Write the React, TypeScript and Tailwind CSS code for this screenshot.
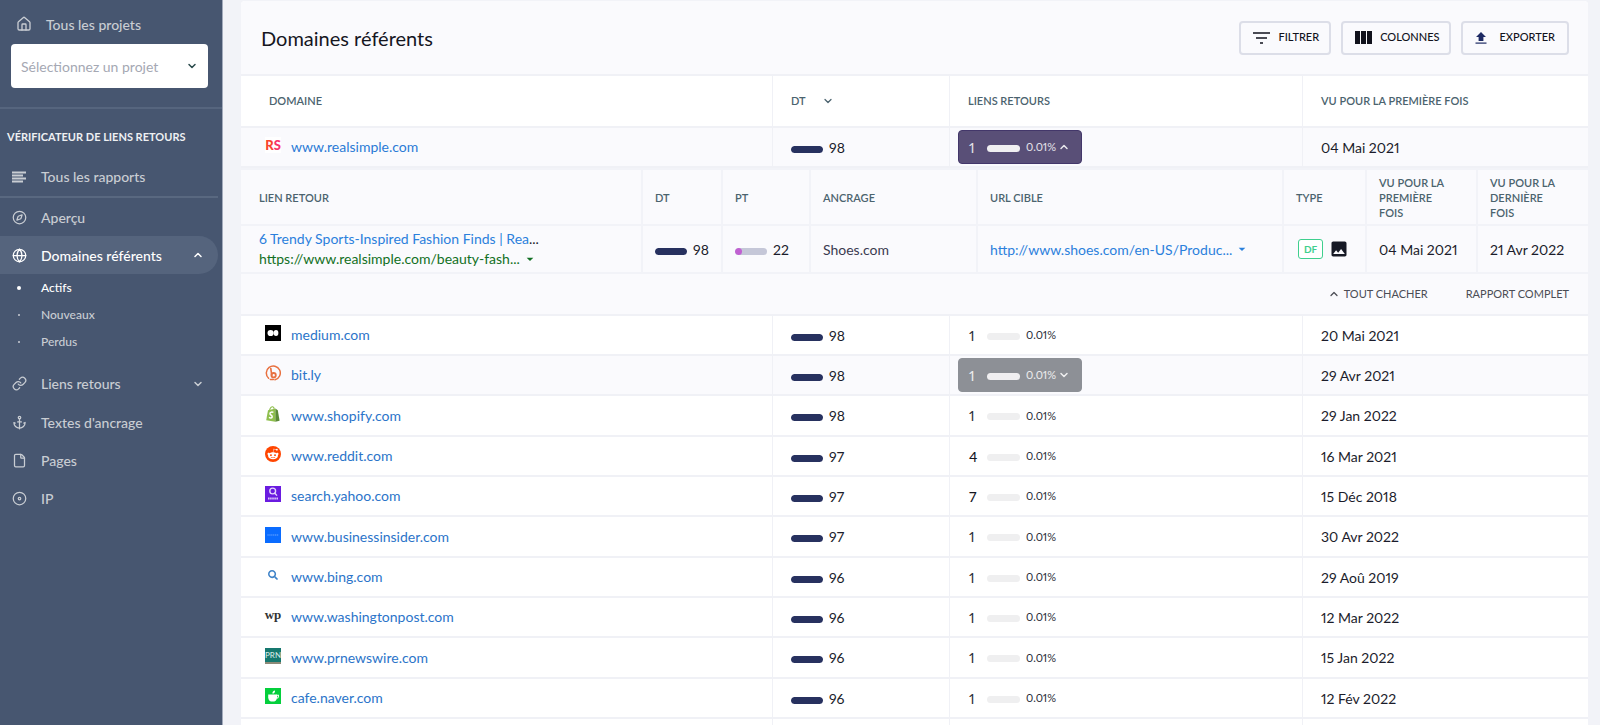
import type { ReactNode } from 'react';
import { useState } from 'react';
import { Anchor, ChevronDown, ChevronUp, Compass, Disc, File, Globe, House, Link } from 'lucide-react';
import { FaRedditAlien, FaSearch } from 'react-icons/fa';
import { MdArrowDropDown, MdImage } from 'react-icons/md';

interface DomainRow {
  domain: string;
  trust: number;
  links: number;
  firstSeen: string;
  icon: ReactNode;
}

const domains: DomainRow[] = [
  { domain: 'medium.com', trust: 98, links: 1, firstSeen: '20 Mai 2021', icon: <MediumIcon /> },
  { domain: 'bit.ly', trust: 98, links: 1, firstSeen: '29 Avr 2021', icon: <BitlyIcon /> },
  { domain: 'www.shopify.com', trust: 98, links: 1, firstSeen: '29 Jan 2022', icon: <ShopifyIcon /> },
  { domain: 'www.reddit.com', trust: 97, links: 4, firstSeen: '16 Mar 2021', icon: <RedditIcon /> },
  { domain: 'search.yahoo.com', trust: 97, links: 7, firstSeen: '15 Déc 2018', icon: <YahooIcon /> },
  { domain: 'www.businessinsider.com', trust: 97, links: 1, firstSeen: '30 Avr 2022', icon: <InsiderIcon /> },
  { domain: 'www.bing.com', trust: 96, links: 1, firstSeen: '29 Aoû 2019', icon: <FaSearch className="size-2.5 text-[#3f83c8]" /> },
  { domain: 'www.washingtonpost.com', trust: 96, links: 1, firstSeen: '12 Mar 2022', icon: <PostIcon /> },
  { domain: 'www.prnewswire.com', trust: 96, links: 1, firstSeen: '15 Jan 2022', icon: <PrnIcon /> },
  { domain: 'cafe.naver.com', trust: 96, links: 1, firstSeen: '12 Fév 2022', icon: <NaverIcon /> },
];

function MediumIcon() {
  return (
    <svg viewBox="0 0 16 16" className="size-4">
      <rect width="16" height="16" fill="#000" />
      <circle cx="5.6" cy="8" r="3.1" fill="#fff" />
      <ellipse cx="11" cy="8" rx="2.4" ry="2.9" fill="#fff" />
    </svg>
  );
}

function BitlyIcon() {
  return (
    <svg viewBox="0 0 16 16" className="size-4" fill="none" stroke="#e8703f" strokeLinecap="round">
      <path d="M3.6 13.2 A7 7 0 1 1 10 14.8" strokeWidth="1.5" />
      <path d="M5.8 3.6 L6.8 10.4" strokeWidth="1.6" />
      <circle cx="8.6" cy="10.2" r="2.2" strokeWidth="1.8" />
      <path d="M5.4 14.4 H8.4" strokeWidth="1.5" />
    </svg>
  );
}

function ShopifyIcon() {
  return (
    <svg viewBox="0 0 16 16" className="size-4">
      <path d="M3 4.2 L10.4 2.4 V15.8 L1.2 14.2 Z" fill="#8fbf4d" />
      <path d="M10.4 2.6 L12.8 4.2 L14.6 14.8 L10.4 15.8 Z" fill="#5a8a36" />
      <path d="M4.6 4.2 C5.2 1.6 6.6 0.5 7.8 0.8 C9 1.1 9.2 2.4 9.2 3.4" fill="none" stroke="#8fbf4d" strokeWidth="1.1" />
      <path
        d="M8.4 6.4 C6.4 5.4 4.6 6.6 5 8 C5.4 9.3 7.3 9.3 7.2 10.9 C7.1 12.4 5.2 12.3 4 11.4"
        fill="none"
        stroke="#fff"
        strokeWidth="1.5"
      />
    </svg>
  );
}

function RedditIcon() {
  return (
    <span className="flex size-4 items-center justify-center rounded-full bg-[#ff4500]">
      <FaRedditAlien className="size-3 text-white" />
    </span>
  );
}

function YahooIcon() {
  return (
    <svg viewBox="0 0 16 16" className="size-4">
      <rect width="16" height="16" fill="#6a1be0" />
      <circle cx="7.7" cy="5" r="2.9" fill="none" stroke="#e4d5fb" strokeWidth="1.4" />
      <path d="M9.8 7.2 L12 9.6" stroke="#e4d5fb" strokeWidth="1.4" />
      <path d="M3 12.6 H13" stroke="#d9c4fa" strokeWidth="2" strokeDasharray="1.6 0.5" />
    </svg>
  );
}

function InsiderIcon() {
  return (
    <svg viewBox="0 0 16 16" className="size-4">
      <rect width="16" height="16" fill="#0a6cff" />
      <path d="M2.4 8 H13.8" stroke="#6ea8ff" strokeWidth="1.1" strokeDasharray="1.3 0.6" />
    </svg>
  );
}

function PostIcon() {
  return (
    <span className="font-['Liberation_Serif',serif] text-[13px] leading-4 font-bold text-[#333]">wp</span>
  );
}

function PrnIcon() {
  return (
    <span className="flex size-4 justify-center border-b-2 border-[#8d8a78] bg-[#16786f] text-[8px] leading-[14px] font-medium text-[#d5e6e2]">
      PRN
    </span>
  );
}

function NaverIcon() {
  return (
    <svg viewBox="0 0 16 16" className="size-4">
      <rect width="16" height="16" fill="#04cf3c" />
      <path d="M3.2 6.4 H12 V9.4 C12 12.2 10 13.6 7.6 13.6 C5.2 13.6 3.2 12.2 3.2 9.4 Z" fill="#fff" />
      <path d="M11.4 7.2 H13.4 V8.4 C13.4 9.6 12.4 10.2 11.4 10.2" fill="none" stroke="#fff" strokeWidth="1.1" />
      <path d="M7.4 5.6 C7.2 3.6 8.4 2.6 10 2.4 C10.2 4.4 9.2 5.5 7.4 5.6" fill="#fff" />
    </svg>
  );
}

function FilterIcon() {
  return (
    <svg viewBox="0 0 17 12" className="h-3 w-[17px]" stroke="currentColor" strokeWidth="1.6">
      <path d="M0 1 H17 M3 6 H14 M7 11 H10" />
    </svg>
  );
}

function ColumnsIcon() {
  return (
    <svg viewBox="0 0 17 13" className="h-[13px] w-[17px]" fill="currentColor">
      <rect width="5" height="13" />
      <rect x="6" width="5" height="13" />
      <rect x="12" width="5" height="13" />
    </svg>
  );
}

function ExportIcon() {
  return (
    <svg viewBox="0 0 12 12" className="size-3 text-[#1d2a63]" fill="currentColor">
      <path d="M6 0 L11 5 H8.4 V9 H3.6 V5 H1 Z" />
      <rect x="0.5" y="10.5" width="11" height="1.2" />
    </svg>
  );
}

function ReportsIcon() {
  return (
    <svg viewBox="0 0 14 12" className="h-3 w-3.5" stroke="currentColor" strokeWidth="1.8">
      <path d="M0 1.5 H14 M0 4.5 H11 M0 7.5 H14 M0 10.5 H11" />
    </svg>
  );
}

function ScoreBar({ value }: { value: number }) {
  const high = value >= 50;
  return (
    <div className="flex items-center gap-1.5 leading-5">
      <div className="mt-1 h-[7px] w-8 overflow-hidden rounded-full bg-[#c5c7d8]">
        <div
          className={`h-full rounded-full ${high ? 'bg-[#27315f]' : 'bg-[#c160d2]'}`}
          style={{ width: `${high ? 100 : value}%` }}
        />
      </div>
      <span className="pt-px">{value}</span>
    </div>
  );
}

interface LinksButtonProps {
  count: number;
  open?: boolean;
  hovered?: boolean;
  onClick?: () => void;
}

function LinksButton({ count, open, hovered, onClick }: LinksButtonProps) {
  const tone = open
    ? 'border-[#43376a] bg-[#594f77] text-white/85'
    : hovered
      ? 'border-[#8d9096] bg-[#8d9096] text-white/85'
      : 'border-transparent text-[#2b2d38]';
  return (
    <button onClick={onClick} className={`flex h-[34px] w-[124px] items-center rounded border pl-2.5 ${tone}`}>
      <span className={`w-[18px] text-left ${count > 1 ? 'font-medium text-[#15161f]' : ''}`}>{count}</span>
      <span className={`mt-0.5 h-[7px] w-[33px] rounded-full ${open || hovered ? 'bg-[#f0eff1]' : 'bg-[#efeff0]'}`} />
      <span className="ml-1.5 pt-px text-[11px]">0.01%</span>
      {open && <ChevronUp className="ml-0.5 size-3" strokeWidth={3} />}
      {hovered && <ChevronDown className="ml-0.5 size-3" strokeWidth={3} />}
    </button>
  );
}

function Sidebar() {
  const item = 'flex items-center pl-3 text-[14px] font-medium';
  return (
    <aside className="w-[223px] shrink-0 border-r border-[#a3abbc] bg-[#475670] text-[#c9cdd3]">
      <a href="#projets" className="flex h-11 items-center pt-1 pl-4 text-[14px] font-medium">
        <House className="size-4" strokeWidth={2} />
        <span className="ml-3.5">Tous les projets</span>
      </a>

      <div className="relative mr-3.5 ml-[11px]">
        <select
          aria-label="Sélectionnez un projet"
          className="h-11 w-full appearance-none rounded bg-white pl-2.5 text-[14px] text-[#a5a8b3]"
        >
          <option>Sélectionnez un projet</option>
        </select>
        <ChevronDown className="pointer-events-none absolute top-4 right-2.5 size-3 text-[#2a4a4c]" strokeWidth={3} />
      </div>

      <h2 className="mt-[19px] border-t-2 border-[#56657e] pt-5 pl-[7px] text-[11px] leading-4 font-bold text-[#eef0f3]">
        VÉRIFICATEUR DE LIENS RETOURS
      </h2>

      <nav>
        <a href="#rapports" className={`${item} mt-3 mr-1 h-[41px] border-b-2 border-[#596880]`}>
          <ReportsIcon />
          <span className="ml-[15px]">Tous les rapports</span>
        </a>
        <a href="#apercu" className={`${item} h-[38px]`}>
          <Compass className="size-[15px]" strokeWidth={2} />
          <span className="ml-3.5">Aperçu</span>
        </a>
        <a href="#domaines" className={`${item} mr-1 h-[38px] rounded-r-full bg-[#55647d] text-white`}>
          <Globe className="size-[15px]" strokeWidth={2} />
          <span className="ml-3.5">Domaines référents</span>
          <ChevronUp className="mr-3.5 ml-auto size-3" strokeWidth={3} />
        </a>
        <ul className="text-[12px] font-medium">
          {['Actifs', 'Nouveaux', 'Perdus'].map((label, i) => (
            <li key={label}>
              <a href={`#${label.toLowerCase()}`} className={`flex h-[27px] items-center ${i === 0 ? 'text-white' : ''}`}>
                <span className="flex w-[41px] justify-center pr-1">
                  <span className={`rounded-full bg-current ${i === 0 ? 'size-1' : 'size-0.5'}`} />
                </span>
                {label}
              </a>
            </li>
          ))}
        </ul>
        <a href="#liens" className={`${item} mt-[9px] mr-1 h-[39px]`}>
          <Link className="size-[15px]" strokeWidth={2} />
          <span className="ml-3.5">Liens retours</span>
          <ChevronDown className="mr-3.5 ml-auto size-3" strokeWidth={3} />
        </a>
        <a href="#textes" className={`${item} h-[38px]`}>
          <Anchor className="size-[15px]" strokeWidth={2} />
          <span className="ml-3.5">Textes d'ancrage</span>
        </a>
        <a href="#pages" className={`${item} h-[38px]`}>
          <File className="size-[15px]" strokeWidth={2} />
          <span className="ml-3.5">Pages</span>
        </a>
        <a href="#ip" className={`${item} h-[38px]`}>
          <Disc className="size-[15px]" strokeWidth={2} />
          <span className="ml-3.5">IP</span>
        </a>
      </nav>
    </aside>
  );
}

function BacklinkDetails({ onClose }: { onClose: () => void }) {
  const line = 'border-r-2 border-b-2 border-[#f2f3f8] last:border-r-0';
  const head = `${line} text-left font-semibold`;
  return (
    <div className="border-t-2 border-[#f2f3f8]">
      <table className="w-full table-fixed border-separate border-spacing-0">
        <colgroup>
          <col />
          <col className="w-20" />
          <col className="w-[88px]" />
          <col className="w-[167px]" />
          <col className="w-[306px]" />
          <col className="w-[83px]" />
          <col className="w-[111px]" />
          <col className="w-[110px]" />
        </colgroup>
        <thead className="text-[11px] leading-[15px] text-[#4b636e]">
          <tr className="h-14">
            <th className={`${head} pl-[18px]`}>LIEN RETOUR</th>
            <th className={`${head} pl-3`}>DT</th>
            <th className={`${head} pl-3`}>PT</th>
            <th className={`${head} pl-3`}>ANCRAGE</th>
            <th className={`${head} pl-3`}>URL CIBLE</th>
            <th className={`${head} pl-3`}>TYPE</th>
            <th className={`${head} pr-6 pl-3`}>VU POUR LA PREMIÈRE FOIS</th>
            <th className={`${head} pr-6 pl-3`}>VU POUR LA DERNIÈRE FOIS</th>
          </tr>
        </thead>
        <tbody>
          <tr className="h-12">
            <td className={`${line} pl-[18px] leading-5`}>
              <a href="#article" className="block text-[#2b80dc]">
                6 Trendy Sports-Inspired Fashion Finds | Rea<span className="text-[#1b1c2b]">...</span>
              </a>
              <a href="#source" className="flex items-center text-[#127024]">
                https://www.realsimple.com/beauty-fash...
                <MdArrowDropDown className="ml-0.5 size-4" />
              </a>
            </td>
            <td className={`${line} pl-3`}><ScoreBar value={98} /></td>
            <td className={`${line} pl-3`}><ScoreBar value={22} /></td>
            <td className={`${line} pl-3 text-[#3a3b50]`}>Shoes.com</td>
            <td className={`${line} pl-3`}>
              <a href="#cible" className="flex items-center text-[#2b80dc]">
                http://www.shoes.com/en-US/Produc...
                <MdArrowDropDown className="ml-0.5 size-4" />
              </a>
            </td>
            <td className={`${line} pl-3.5`}>
              <div className="flex items-center gap-1.5">
                <span className="rounded-[3px] border border-[#3fcf8e] bg-white px-[5px] text-[10px] leading-[18px] font-bold text-[#3fcf8e]">
                  DF
                </span>
                <MdImage className="size-5 text-[#161925]" />
              </div>
            </td>
            <td className={`${line} pl-3`}>04 Mai 2021</td>
            <td className={`${line} pl-3`}>21 Avr 2022</td>
          </tr>
        </tbody>
      </table>
      <div className="flex h-10 items-center justify-end gap-[38px] pr-[19px] text-[11px] text-[#4b4d55]">
        <button onClick={onClose} className="flex items-center gap-1">
          <ChevronUp className="size-3" strokeWidth={2.5} />
          TOUT CHACHER
        </button>
        <button>RAPPORT COMPLET</button>
      </div>
    </div>
  );
}

export default function App() {
  const [expanded, setExpanded] = useState(true);

  const line = 'border-r border-b-2 border-[#f0f1f6] last:border-r-0';
  const th = `${line} text-left font-semibold`;
  const action =
    'flex h-[34px] items-center rounded border-2 border-[#dcdee8] bg-[#fafafd] text-[11px] font-medium text-[#11121c]';

  return (
    <div className="flex h-screen overflow-hidden bg-[#f2f3f8] font-[Lato,'Noto_Sans',sans-serif] text-[14px] text-[#1b1c2b] proportional-nums">
      <Sidebar />

      <main className="min-w-0 flex-1 pt-px pr-3 pl-[18px]">
        <section className="rounded-t bg-white">
          {/* Title bar */}
          <header className="flex h-[75px] items-center justify-between rounded-t border-b-2 border-[#f0f1f6] bg-[#fafafd] pr-[19px] pl-5">
            <h1 className="text-[20px] text-[#15161f]">Domaines référents</h1>
            <div className="flex gap-2.5">
              <button className={`${action} gap-2 pr-2.5 pl-3`}>
                <FilterIcon />
                FILTRER
              </button>
              <button className={`${action} gap-2 pr-2.5 pl-3`}>
                <ColumnsIcon />
                COLONNES
              </button>
              <button className={`${action} gap-3 px-3`}>
                <ExportIcon />
                EXPORTER
              </button>
            </div>
          </header>

          {/* Domains */}
          <table className="w-full table-fixed border-separate border-spacing-0">
            <colgroup>
              <col />
              <col className="w-[177px]" />
              <col className="w-[353px]" />
              <col className="w-[285px]" />
            </colgroup>
            <thead className="text-[11px] text-[#4b636e]">
              <tr className="h-[52px]">
                <th className={`${th} pl-7`}>DOMAINE</th>
                <th className={`${th} pl-[18px]`}>
                  <span className="flex items-center gap-4">
                    DT
                    <ChevronDown className="size-3" strokeWidth={2.5} />
                  </span>
                </th>
                <th className={`${th} pl-[18px]`}>LIENS RETOURS</th>
                <th className={`${th} pl-[18px]`}>VU POUR LA PREMIÈRE FOIS</th>
              </tr>
            </thead>
            <tbody>
              <tr className="h-10 bg-[#fafafd]">
                <td className={`${line} pl-6`}>
                  <div className="flex gap-2.5 leading-5">
                    <span className="flex size-4 items-center justify-center bg-white text-[13px] font-black">
                      <span className="text-[#f9432f]">R</span>
                      <span className="text-[#f8336b]">S</span>
                    </span>
                    <a href="#realsimple" className="text-[#2b7bd6]">www.realsimple.com</a>
                  </div>
                </td>
                <td className={`${line} pl-[18px]`}><ScoreBar value={98} /></td>
                <td className={`${line} pl-2`}>
                  <LinksButton count={1} open={expanded} onClick={() => setExpanded(!expanded)} />
                </td>
                <td className={`${line} pl-[18px]`}>04 Mai 2021</td>
              </tr>
              {expanded && (
                <tr className="bg-[#fafafd]">
                  <td colSpan={4} className="border-b-2 border-[#f0f1f6] p-0">
                    <BacklinkDetails onClose={() => setExpanded(false)} />
                  </td>
                </tr>
              )}
              {domains.map((row, i) => (
                <tr
                  key={row.domain}
                  className={`${i % 3 === 2 ? 'h-[41px]' : 'h-10'} ${row.domain === 'bit.ly' ? 'bg-[#fafafd]' : ''}`}
                >
                  <td className={`${line} pl-6`}>
                    <div className="flex gap-2.5 leading-5">
                      <span className="flex size-4 items-center justify-center">{row.icon}</span>
                      <a href={`#${row.domain}`} className="text-[#2b74c9]">{row.domain}</a>
                    </div>
                  </td>
                  <td className={`${line} pl-[18px]`}><ScoreBar value={row.trust} /></td>
                  <td className={`${line} pl-2`}>
                    <LinksButton count={row.links} hovered={row.domain === 'bit.ly'} />
                  </td>
                  <td className={`${line} pl-[18px]`}>{row.firstSeen}</td>
                </tr>
              ))}
              <tr className="h-10">
                <td className={line} />
                <td className={line} />
                <td className={line} />
                <td className={line} />
              </tr>
            </tbody>
          </table>
        </section>
      </main>
    </div>
  );
}
